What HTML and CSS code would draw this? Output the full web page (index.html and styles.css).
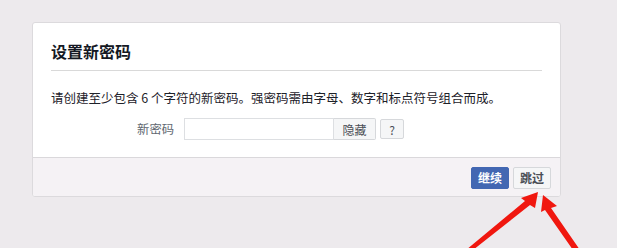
FILE: index.html
```html
<!DOCTYPE html>
<html lang="zh-CN">
<head>
<meta charset="utf-8">
<link rel="stylesheet" href="styles.css">
</head>
<body>
<div class="card">
  <div class="card-body">
    <h2 class="title">设置新密码</h2>
    <p class="desc">请创建至少包含 6 个字符的新密码。强密码需由字母、数字和标点符号组合而成。</p>
    <div class="form-row">
      <label class="label">新密码</label>
      <input class="input" type="text">
      <button class="btn btn-attached">隐藏</button>
      <button class="btn btn-help">?</button>
    </div>
  </div>
  <div class="card-footer">
    <button class="btn btn-primary">继续</button>
    <button class="btn btn-skip">跳过</button>
  </div>
</div>
<svg class="arrows" width="617" height="248" viewBox="0 0 617 248">
  <polygon points="538,192 535,208 530,205 473,250 466,250 525,201 521,198" fill="#f0170f"/>
  <polygon points="543,195 557,206 551,208 580,250 573,250 545,210 541,212" fill="#f0170f"/>
</svg>
</body>
</html>
```

FILE: styles.css
```css
html, body {
  margin: 0;
  padding: 0;
}
body {
  background: #edeaed;
  width: 617px;
  height: 248px;
  overflow: hidden;
  position: relative;
  padding: 22px 0 0 32px;
  box-sizing: border-box;
  font-family: "Noto Sans CJK SC", "Liberation Sans", sans-serif;
}
.card {
  width: 529px;
  height: 175px;
  box-sizing: border-box;
  background: #fff;
  border: 1px solid #dcdadd;
  border-radius: 3px;
  display: flex;
  flex-direction: column;
  overflow: hidden;
}
.card-body {
  padding: 0 18px;
  height: 135px;
  border-bottom: 1px solid #dad8db;
  box-sizing: border-box;
}
.title {
  margin: 0;
  padding-top: 17px;
  font-size: 16px;
  line-height: 22px;
  font-weight: bold;
  color: #141823;
  padding-bottom: 8px;
  border-bottom: 1px solid #d9d9d9;
}
.desc {
  margin: 0;
  padding-top: 19px;
  font-size: 12.5px;
  line-height: 16px;
  color: #1d2129;
}
.form-row {
  display: flex;
  align-items: center;
  margin-top: 12px;
}
.label {
  width: 123px;
  text-align: right;
  font-size: 12.3px;
  color: #606770;
  margin-right: 10px;
}
.input {
  width: 150px;
  height: 22px;
  box-sizing: border-box;
  border: 1px solid #dddfe2;
  padding: 0 4px;
  margin: 0;
  outline: none;
}
.btn {
  font-family: inherit;
  font-size: 12px;
  box-sizing: border-box;
  margin: 0;
  padding: 0;
  cursor: pointer;
  border-radius: 2px;
  background: #f5f6f7;
  border: 1px solid #d6d8db;
  color: #4b4f56;
}
.btn-attached {
  width: 42px;
  height: 22px;
  border-left: none;
  border-radius: 0 2px 2px 0;
}
.btn-help {
  width: 24px;
  height: 20px;
  margin-left: 4px;
  font-size: 12px;
}
.card-footer {
  flex: 1;
  background: #f5f2f5;
  display: flex;
  justify-content: flex-end;
  align-items: center;
  gap: 4px;
  padding: 1px 9px 0 0;
}
.btn-primary {
  width: 38px;
  height: 22px;
  background: #4267b2;
  border-color: #4267b2;
  color: #fff;
  font-weight: bold;
}
.btn-skip {
  width: 38px;
  height: 22px;
  font-weight: bold;
}
.arrows {
  position: absolute;
  left: 0;
  top: 0;
  pointer-events: none;
}
```
